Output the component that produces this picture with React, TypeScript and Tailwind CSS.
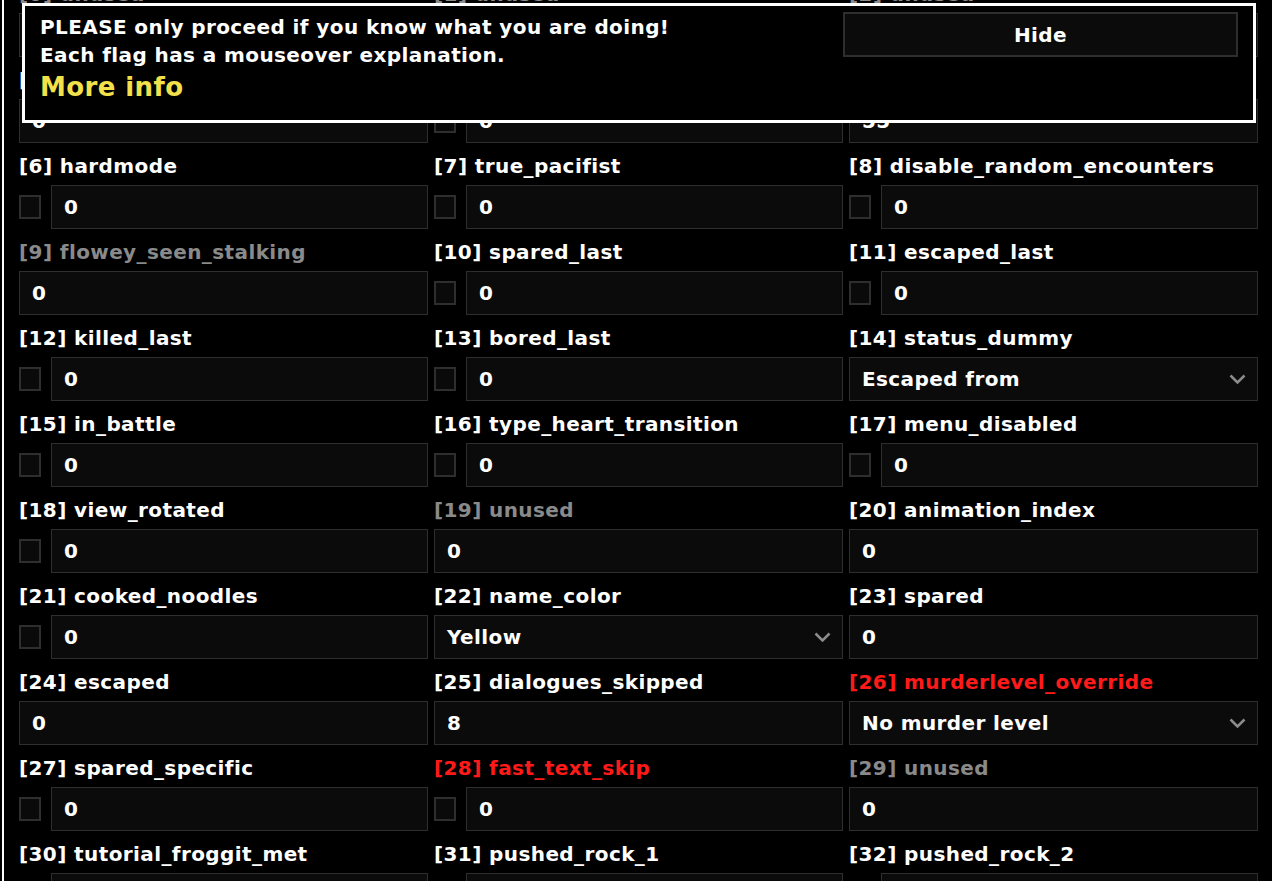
type Flag = {
  id: number
  name: string
  kind: "cb" | "num" | "sel"
  value: string
  tone?: "grey" | "red"
}

const flags: Flag[] = [
  { id: 0, name: "unused", kind: "num", value: "0", tone: "grey" },
  { id: 1, name: "unused", kind: "num", value: "0", tone: "grey" },
  { id: 2, name: "unused", kind: "num", value: "0", tone: "grey" },
  { id: 3, name: "route_choice", kind: "num", value: "0" },
  { id: 4, name: "named_self", kind: "cb", value: "0" },
  { id: 5, name: "fun", kind: "num", value: "55" },
  { id: 6, name: "hardmode", kind: "cb", value: "0" },
  { id: 7, name: "true_pacifist", kind: "cb", value: "0" },
  { id: 8, name: "disable_random_encounters", kind: "cb", value: "0" },
  { id: 9, name: "flowey_seen_stalking", kind: "num", value: "0", tone: "grey" },
  { id: 10, name: "spared_last", kind: "cb", value: "0" },
  { id: 11, name: "escaped_last", kind: "cb", value: "0" },
  { id: 12, name: "killed_last", kind: "cb", value: "0" },
  { id: 13, name: "bored_last", kind: "cb", value: "0" },
  { id: 14, name: "status_dummy", kind: "sel", value: "Escaped from" },
  { id: 15, name: "in_battle", kind: "cb", value: "0" },
  { id: 16, name: "type_heart_transition", kind: "cb", value: "0" },
  { id: 17, name: "menu_disabled", kind: "cb", value: "0" },
  { id: 18, name: "view_rotated", kind: "cb", value: "0" },
  { id: 19, name: "unused", kind: "num", value: "0", tone: "grey" },
  { id: 20, name: "animation_index", kind: "num", value: "0" },
  { id: 21, name: "cooked_noodles", kind: "cb", value: "0" },
  { id: 22, name: "name_color", kind: "sel", value: "Yellow" },
  { id: 23, name: "spared", kind: "num", value: "0" },
  { id: 24, name: "escaped", kind: "num", value: "0" },
  { id: 25, name: "dialogues_skipped", kind: "num", value: "8" },
  { id: 26, name: "murderlevel_override", kind: "sel", value: "No murder level", tone: "red" },
  { id: 27, name: "spared_specific", kind: "cb", value: "0" },
  { id: 28, name: "fast_text_skip", kind: "cb", value: "0", tone: "red" },
  { id: 29, name: "unused", kind: "num", value: "0", tone: "grey" },
  { id: 30, name: "tutorial_froggit_met", kind: "cb", value: "0" },
  { id: 31, name: "pushed_rock_1", kind: "cb", value: "0" },
  { id: 32, name: "pushed_rock_2", kind: "cb", value: "0" },
]

function FlagCell({ flag }: { flag: Flag }) {
  const labelColor =
    flag.tone === "grey" ? "text-[#8a8a8a]" : flag.tone === "red" ? "text-[#ff1a1a]" : "text-white"

  return (
    <div className="flex flex-col">
      <div className={`h-[28px] leading-[28px] whitespace-nowrap ${labelColor}`}>
        [{flag.id}] {flag.name}
      </div>
      <div className="mt-[5px] flex items-center gap-[10px]">
        {flag.kind === "cb" && (
          <div className="w-[22px] h-[24px] shrink-0 border-2 border-[#2e2e2e] bg-[#0a0a0a]" />
        )}
        <div className="flex-1 h-[44px] border border-[#2e2e2e] bg-[#0b0b0b] px-[12px] flex items-center justify-between text-white">
          <span>{flag.value}</span>
          {flag.kind === "sel" && (
            <svg width="17" height="10" viewBox="0 0 17 10" className="-mr-[1px]">
              <polyline points="1.5,1.5 8.5,8.5 15.5,1.5" fill="none" stroke="#8c8c8c" strokeWidth="2.5" />
            </svg>
          )}
        </div>
      </div>
    </div>
  )
}

export default function App() {
  return (
    <div
      className="h-screen overflow-hidden bg-black text-[20px] font-bold tracking-[0.4px]"
      style={{ fontFamily: '"DejaVu Sans", "Liberation Sans", sans-serif' }}
    >
      <div className="ml-[2px] h-full border-l-2 border-white pl-[15px] pr-[14px] flex flex-col">
        <div className="-mt-[20px] grid grid-cols-3 gap-x-[6px] gap-y-[9px]">
          {flags.map((f) => (
            <FlagCell key={f.id} flag={f} />
          ))}
        </div>
      </div>

      <div className="fixed top-[3px] left-[22px] w-[1234px] h-[120px] border-[3px] border-white bg-black flex justify-between">
        <div className="pl-[15px] pt-[7px] text-white">
          <div className="leading-[28px]">PLEASE only proceed if you know what you are doing!</div>
          <div className="leading-[28px]">Each flag has a mouseover explanation.</div>
          <div className="mt-[2px] leading-[32px] text-[26px] text-[#f3e14b]">More info</div>
        </div>
        <button className="mt-[6px] mr-[15px] w-[395px] h-[45px] border-2 border-[#2e2e2e] bg-[#0b0b0b] text-white">
          Hide
        </button>
      </div>
    </div>
  )
}
